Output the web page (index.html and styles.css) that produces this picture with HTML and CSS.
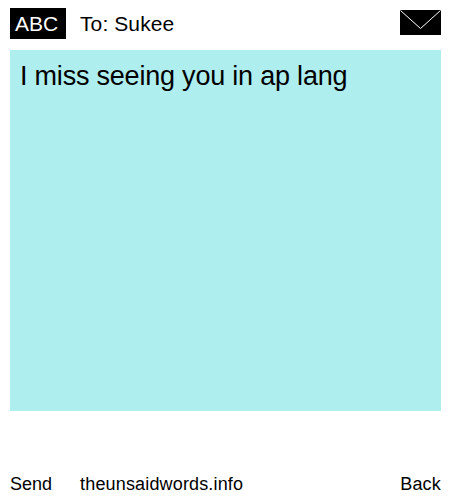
FILE: index.html
```html
<!DOCTYPE html>
<html lang="en">
<head>
  <meta charset="UTF-8" />
  <meta name="viewport" content="width=device-width, initial-scale=1.0"/>
  <title>The Unsaid Words</title>
  <link rel="stylesheet" href="styles.css">
</head>
<body>

  <!-- Header -->
  <div class="header">
    <div class="abc">ABC</div>
    <div class="to">To: Sukee</div>
    <svg class="envelope" width="41" height="25" viewBox="0 0 41 25">
      <rect width="41" height="25" fill="#000"/>
      <path d="M0.5 0.5 L20.5 18.5 L40.5 0.5" fill="none" stroke="#fff" stroke-width="1"/>
    </svg>
  </div>

  <!-- Message -->
  <div class="message">I miss seeing you in ap lang</div>

  <!-- Footer -->
  <div class="footer">
    <span class="send">Send</span>
    <span class="site">theunsaidwords.info</span>
    <span class="back">Back</span>
  </div>

</body>
</html>
```

FILE: styles.css
```css
* {
  margin: 0;
  padding: 0;
  box-sizing: border-box;
  font-family: "Liberation Sans", Arial, sans-serif;
}

body {
  background: white;
  color: black;
  height: 500px;
  padding: 8px 9px 0 10px;
  overflow: hidden;
}

.header {
  display: flex;
  align-items: center;
  height: 31px;
}

.abc {
  width: 56px;
  height: 31px;
  padding-left: 5px;
  line-height: 31px;
  background: black;
  color: white;
  font-size: 21px;
}

.to {
  margin-left: 14px;
  font-size: 21px;
  letter-spacing: 0.1px;
}

.envelope {
  margin-left: auto;
  margin-top: -2px;
}

.message {
  margin-top: 11px;
  height: 361px;
  padding: 10px;
  background: #afeeee;
  font-size: 27px;
  letter-spacing: -0.21px;
  line-height: 33px;
}

.footer {
  display: flex;
  margin-top: 63px;
  font-size: 18px;
  line-height: 21px;
}

.site {
  margin-left: 28px;
  letter-spacing: 0.16px;
}

.back {
  margin-left: auto;
  letter-spacing: 0.2px;
}
```
